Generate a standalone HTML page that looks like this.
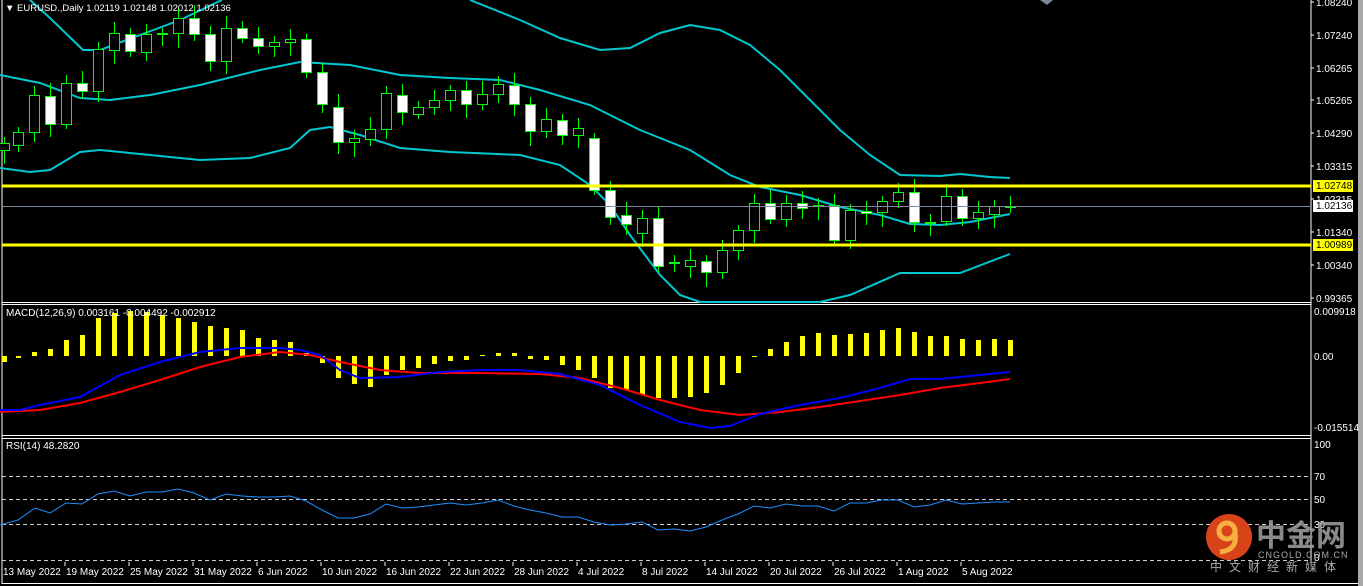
<!DOCTYPE html>
<html><head><meta charset="utf-8"><style>
html,body{margin:0;padding:0;background:#000;width:1363px;height:586px;overflow:hidden}
svg{display:block}
text{font-family:"Liberation Sans","Noto Sans CJK SC",sans-serif;font-size:10px;fill:#fff}
</style></head><body>
<svg id="s" width="1363" height="586" xmlns="http://www.w3.org/2000/svg">
<rect width="1363" height="586" fill="#000"/>
<rect x="1358" y="0" width="5" height="586" fill="#a8a8a8"/>
<g id="g"></g>
</svg>
<script>
const NS="http://www.w3.org/2000/svg",g=document.getElementById('g');
function el(t,a,txt){const e=document.createElementNS(NS,t);for(const k in a)e.setAttribute(k,a[k]);if(txt!==undefined)e.textContent=txt;g.appendChild(e);return e;}
function pl(pts,c,w,extra){el('polyline',Object.assign({points:pts.map(p=>p.join(',')).join(' '),fill:'none',stroke:c,'stroke-width':w},extra||{}));}
el('line',{x1:2,y1:0,x2:2,y2:584,stroke:'#fff'});
el('line',{x1:1311,y1:0,x2:1311,y2:562,stroke:'#fff'});
[302,304,435,438].forEach(y=>el('line',{x1:2,y1:y+.5,x2:1311,y2:y+.5,stroke:'#fff'}));
el('line',{x1:2,y1:583.5,x2:1358,y2:583.5,stroke:'#fff'});
[476,499,524,560].forEach(y=>el('line',{x1:2,y1:y+.5,x2:1311,y2:y+.5,stroke:'#ccc','stroke-dasharray':'4,3'}));
pl([[30,0],[50,18],[83,50],[100,50],[140,35],[180,20],[222,0]],'#00c8d0',2);
pl([[470,0],[520,20],[560,38],[600,50],[630,48],[660,33],[690,25],[720,30],[750,45],[780,70],[800,90],[840,130],[870,155],[900,175],[940,176],[960,174],[990,177],[1010,178]],'#00c8d0',2);
pl([[0,75],[40,83],[80,98],[110,100],[150,95],[200,85],[260,70],[300,62],[350,65],[400,75],[450,78],[500,80],[540,90],[590,105],[640,130],[690,150],[730,175],[760,187],[800,195],[840,207],[880,215],[910,224],[940,225],[970,222],[1010,214]],'#00c8d0',2);
pl([[0,168],[30,172],[50,170],[80,152],[100,150],[150,155],[200,160],[250,158],[290,148],[310,130],[330,127],[360,135],[400,148],[450,152],[520,155],[560,165],[590,185],[610,205],[630,235],[660,275],[680,295],[700,302],[820,302],[850,295],[900,273],[960,273],[1010,254]],'#00c8d0',2);
const C=[[4,143,150,1],[18,132,145,1],[34,95,132,1],[50,96,124,0],[66,83,124,1],[82,83,91,0],[98,49,91,1],[114,33,50,1],[130,34,51,0],[146,34,52,1],[162,33,34,1],[178,18,33,1],[194,18,34,0],[210,34,61,0],[226,28,61,1],[242,28,38,0],[258,38,46,0],[274,42,46,1],[290,39,42,1],[306,39,72,0],[322,72,104,0],[338,107,142,0],[354,138,142,1],[370,129,139,1],[386,93,129,1],[402,95,112,0],[418,107,114,1],[434,100,107,1],[450,90,100,1],[466,90,104,0],[482,94,104,1],[498,84,94,1],[514,85,104,0],[530,104,131,0],[546,119,131,1],[562,120,135,0],[578,128,135,1],[594,138,190,0],[610,190,217,0],[626,215,224,0],[642,218,233,1],[658,218,266,0],[674,262,263,1],[690,260,266,1],[706,261,272,0],[722,250,272,1],[738,230,250,1],[754,203,230,1],[770,203,219,0],[786,203,219,1],[802,203,208,0],[818,205,206,1],[834,205,240,0],[850,210,240,1],[866,211,213,0],[882,201,212,1],[898,192,201,1],[914,192,222,0],[930,222,223,1],[946,196,221,1],[962,196,218,0],[978,212,218,1],[994,206,214,1],[1010,206,207,1]];
C.forEach(c=>{const[x,t,b,u]=c;const hi=t-5-(x*7%9),lo=b+5+(x*5%11);
el('line',{x1:x+.5,y1:hi,x2:x+.5,y2:lo,stroke:'#00ff00'});
el('rect',{x:x-4.5,y:t+.5,width:10,height:Math.max(b-t,1),fill:u?'#000':'#fff',stroke:'#00ff00'});});
el('rect',{x:2,y:184.5,width:1309,height:3,fill:'#ffff00'});
el('rect',{x:2,y:243.5,width:1309,height:3,fill:'#ffff00'});
el('line',{x1:2,y1:206.5,x2:1311,y2:206.5,stroke:'#7a8a99'});
const H=[[4,362],[18,358],[34,352],[50,349],[66,340],[82,335],[98,318],[114,313],[130,311],[146,312],[162,315],[178,318],[194,322],[210,326],[226,328],[242,330],[258,338],[274,340],[290,342],[306,353],[322,363],[338,378],[354,384],[370,387],[386,375],[402,370],[418,368],[434,364],[450,361],[466,360],[482,355],[498,353],[514,353],[530,359],[546,360],[562,365],[578,370],[594,378],[610,388],[626,390],[642,395],[658,398],[674,398],[690,397],[706,393],[722,385],[738,373],[754,357],[770,349],[786,342],[802,336],[818,333],[834,335],[850,334],[866,333],[882,330],[898,328],[914,332],[930,336],[946,336],[962,339],[978,340],[994,339],[1010,340]];
H.forEach(([x,v])=>{const y0=Math.min(v,356),h=Math.max(Math.abs(v-356),1);el('rect',{x:x-2,y:y0,width:5,height:h,fill:'#ffff00'});});
pl([[0,412],[40,410],[80,403],[120,392],[160,380],[200,367],[240,357],[280,352],[310,355],[340,362],[380,370],[420,373],[480,373],[540,374],[580,378],[620,388],[660,400],[700,410],[740,415],[780,412],[820,407],[860,401],[900,395],[940,388],[980,383],[1010,379]],'#ff0000',2);
pl([[0,410],[20,410],[40,405],[80,397],[120,375],[160,362],[200,352],[240,348],[280,348],[300,350],[320,355],[340,370],[360,378],[400,377],[440,372],[480,370],[520,370],[560,374],[600,385],[640,405],[680,422],[710,428],[730,426],[760,414],[800,405],[840,398],[880,388],[910,379],[940,379],[980,375],[1010,372]],'#0000ff',2);
pl([[0,525],[18,520],[35,508],[50,513],[66,503],[82,504],[98,494],[114,491],[130,496],[146,492],[162,492],[178,489],[194,493],[210,500],[226,494],[242,496],[258,497],[274,497],[290,496],[306,501],[322,510],[338,518],[354,518],[370,514],[386,504],[402,508],[418,507],[434,505],[450,503],[466,505],[482,503],[498,500],[514,506],[530,510],[546,513],[562,517],[578,517],[594,522],[610,525],[626,524],[642,522],[658,530],[674,529],[690,531],[706,527],[722,520],[738,514],[754,506],[770,508],[786,504],[802,506],[818,506],[834,511],[850,503],[866,503],[882,500],[898,500],[914,507],[930,505],[946,500],[962,504],[978,503],[994,502],[1010,502]],'#1e90ff',1);
el('text',{x:5,y:11,style:'font-size:9.5px'},'▼  EURUSD.,Daily  1.02119 1.02148 1.02012 1.02136');
el('text',{x:6,y:316},'MACD(12,26,9) 0.003161 -0.004492 -0.002912');
el('text',{x:6,y:449},'RSI(14) 48.2820');
[['1.08240',6],['1.07240',39],['1.06265',72],['1.05265',104],['1.04290',137],['1.03315',170],['1.02315',203],['1.01340',236],['1.00340',269],['0.99365',302]].forEach(([t,y])=>{el('line',{x1:1311,y1:y-4,x2:1314,y2:y-4,stroke:'#fff'});el('text',{x:1316,y:y},t);});
el('rect',{x:1313,y:180,width:40,height:12,fill:'#ffff00'});el('text',{x:1316,y:189,style:'fill:#000'},'1.02748');
el('rect',{x:1313,y:200,width:40,height:12,fill:'#fff'});el('text',{x:1316,y:209,style:'fill:#000'},'1.02136');
el('rect',{x:1313,y:239,width:40,height:12,fill:'#ffff00'});el('text',{x:1316,y:248,style:'fill:#000'},'1.00989');
[['0.009918',315],['0.00',360],['-0.015514',431],['100',448],['70',480],['50',503],['30',528],['0',561]].forEach(([t,y])=>el('text',{x:1314,y:y},t));
[['13 May 2022',2],['19 May 2022',65],['25 May 2022',129],['31 May 2022',193],['6 Jun 2022',257],['10 Jun 2022',321],['16 Jun 2022',385],['22 Jun 2022',449],['28 Jun 2022',513],['4 Jul 2022',577],['8 Jul 2022',641],['14 Jul 2022',705],['20 Jul 2022',769],['26 Jul 2022',833],['1 Aug 2022',897],['5 Aug 2022',961]].forEach(([t,x])=>{el('line',{x1:x,y1:562,x2:x,y2:566,stroke:'#fff'});el('text',{x:x+1,y:575},t);});
el('path',{d:'M1040 0 L1053 0 L1047 5 Z',fill:'#7a8a99'});
el('circle',{cx:1229,cy:537,r:23,fill:'#d9431a'});
el('circle',{cx:1227,cy:531,r:8,fill:'none',stroke:'#f5b040','stroke-width':5});
el('path',{d:'M1235 533 Q1238 550 1220 552',fill:'none',stroke:'#f5b040','stroke-width':5});
el('text',{x:1256,y:546,style:'font-size:30px;fill:#999;font-weight:bold;opacity:0.9'},'中金网');
el('text',{x:1258,y:558,style:'font-size:9px;fill:#aaa;letter-spacing:1px'},'CNGOLD.COM.CN');
el('text',{x:1210,y:571,style:'font-size:12px;fill:#aaa;letter-spacing:7px'},'中文财经新媒体');
</script>
</body></html>
